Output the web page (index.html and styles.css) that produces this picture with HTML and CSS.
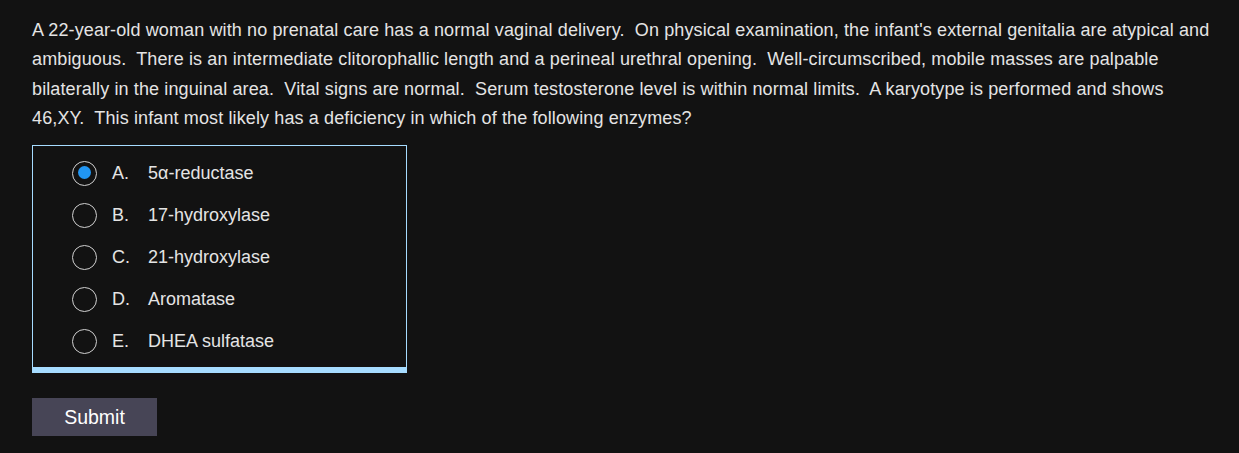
FILE: index.html
```html
<!DOCTYPE html>
<html>
<head>
<meta charset="utf-8">
<link rel="stylesheet" href="styles.css">
</head>
<body>
<div class="page">
  <p class="stem">A 22-year-old woman with no prenatal care has a normal vaginal delivery.&nbsp; On physical examination, the infant's external genitalia are atypical and ambiguous.&nbsp; There is an intermediate clitorophallic length and a perineal urethral opening.&nbsp; Well-circumscribed, mobile masses are palpable bilaterally in the inguinal area.&nbsp; Vital signs are normal.&nbsp; Serum testosterone level is within normal limits.&nbsp; A karyotype is performed and shows 46,XY.&nbsp; This infant most likely has a deficiency in which of the following enzymes?</p>
  <div class="choices">
    <div class="choice"><span class="radio selected"></span><span class="letter">A.</span><span class="text">5α-reductase</span></div>
    <div class="choice"><span class="radio"></span><span class="letter">B.</span><span class="text">17-hydroxylase</span></div>
    <div class="choice"><span class="radio"></span><span class="letter">C.</span><span class="text">21-hydroxylase</span></div>
    <div class="choice"><span class="radio"></span><span class="letter">D.</span><span class="text">Aromatase</span></div>
    <div class="choice"><span class="radio"></span><span class="letter">E.</span><span class="text">DHEA sulfatase</span></div>
  </div>
  <button class="submit">Submit</button>
</div>
</body>
</html>
```
FILE: styles.css
```css
html, body {
  margin: 0;
  padding: 0;
  background: #121212;
}
.page {
  padding: 16px 10px 0 32px;
  font-family: "Liberation Sans", Arial, sans-serif;
  color: #e4e4e4;
}
.stem {
  margin: 0;
  font-size: 18px;
  letter-spacing: 0.12px;
  line-height: 29.3px;
  max-width: 1186px;
}
.choices {
  margin-top: 12px;
  width: 373px;
  border: 1px solid #a6dcff;
  border-bottom: 6px solid #a6dcff;
  padding: 6px 0 5px 0;
}
.choice {
  display: flex;
  align-items: center;
  height: 42px;
  font-size: 18px;
}
.radio {
  box-sizing: border-box;
  width: 25px;
  height: 25px;
  border-radius: 50%;
  border: 1.5px solid #d0d0d0;
  margin-left: 39px;
  background: #121212;
  position: relative;
  flex: none;
}
.radio.selected::after {
  content: "";
  position: absolute;
  left: 4.5px;
  top: 4.5px;
  width: 13px;
  height: 13px;
  border-radius: 50%;
  background: #2196f3;
}
.letter {
  margin-left: 15px;
  width: 36px;
}
.submit {
  display: block;
  margin-top: 25px;
  width: 125px;
  height: 38px;
  border: none;
  background: #474556;
  color: #ffffff;
  font-family: "Liberation Sans", Arial, sans-serif;
  font-size: 19.5px;
  padding: 0;
}
```
